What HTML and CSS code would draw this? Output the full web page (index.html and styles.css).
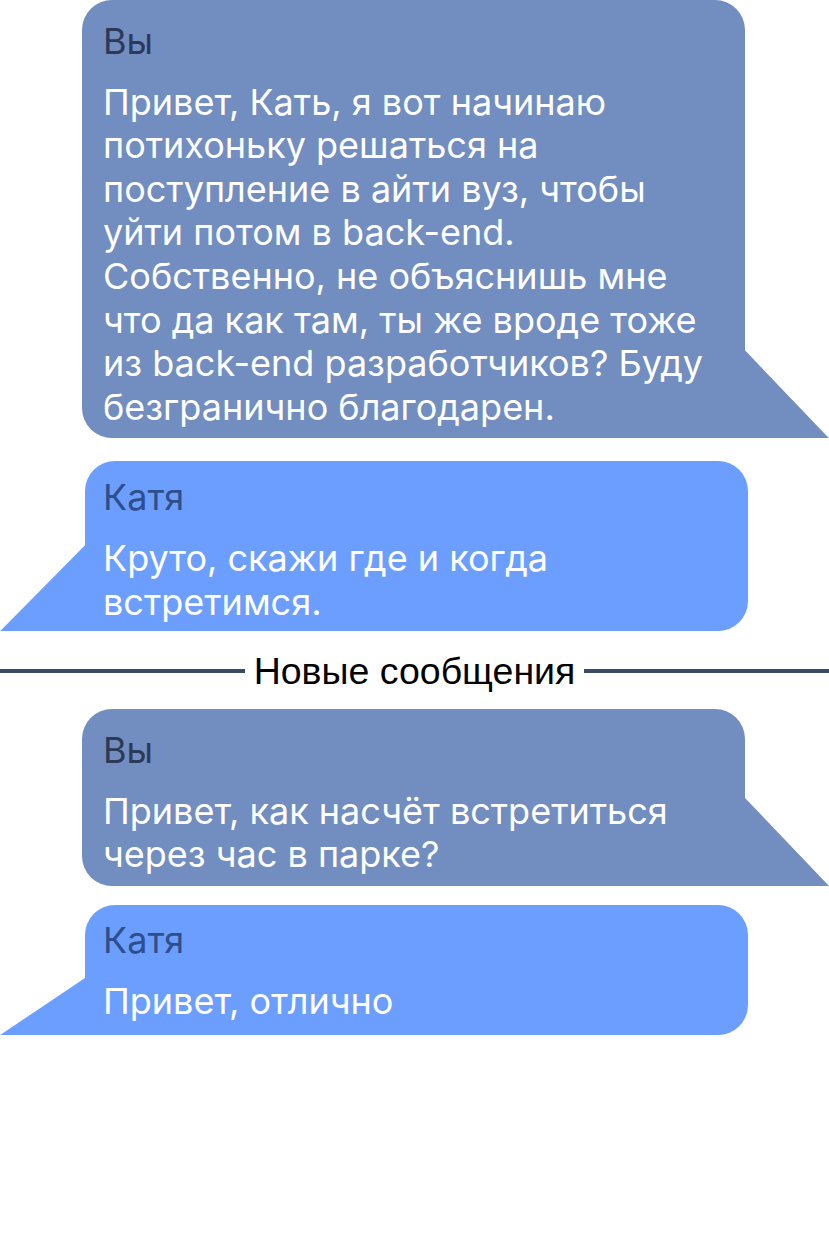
FILE: index.html
```html
<!DOCTYPE html>
<html lang="ru">
<head>
<meta charset="utf-8">
<title>Чат</title>
<link rel="stylesheet" href="styles.css">
</head>
<body>
<div class="chat">
  <div class="msg msg-out">
    <div class="name">Вы</div>
    <div class="text">Привет, Кать, я вот начинаю<br>потихоньку решаться на<br>поступление в айти вуз, чтобы<br>уйти потом в back-end.<br>Собственно, не объяснишь мне<br>что да как там, ты же вроде тоже<br>из back-end разработчиков? Буду<br>безгранично благодарен.</div>
  </div>
  <div class="msg msg-in">
    <div class="name">Катя</div>
    <div class="text">Круто, скажи где и когда<br>встретимся.</div>
  </div>
  <div class="divider">
    <span class="divider-line"></span>
    <span class="divider-text">Новые сообщения</span>
    <span class="divider-line"></span>
  </div>
  <div class="msg msg-out">
    <div class="name">Вы</div>
    <div class="text">Привет, как насчёт встретиться<br>через час в парке?</div>
  </div>
  <div class="msg msg-in msg-short-tail">
    <div class="name">Катя</div>
    <div class="text">Привет, отлично</div>
  </div>
</div>
</body>
</html>
```
FILE: styles.css
```css
html, body {
  margin: 0;
  padding: 0;
  background: #ffffff;
}

.chat {
  width: 829px;
  display: flex;
  flex-direction: column;
  font-family: "Inter", "Noto Sans", sans-serif;
}

.msg {
  position: relative;
  width: 663px;
  box-sizing: border-box;
  padding: 20px 21px 9px 21px;
  font-size: 36px;
  color: #ffffff;
}

.msg .name {
  line-height: 43.6px;
  margin-bottom: 17px;
}

.msg .text {
  line-height: 43.6px;
}

.msg-out {
  margin-left: 82px;
  background: #728dc0;
  border-radius: 30px 30px 0 30px;
}

.msg-out .name {
  color: #2c3a57;
}

.msg-out::after {
  content: "";
  position: absolute;
  left: 100%;
  bottom: 0;
  width: 84px;
  height: 88px;
  background: #728dc0;
  clip-path: polygon(0 0, 100% 100%, 0 100%);
}

.msg-in {
  margin-left: 85px;
  padding: 15px 18px 7px 18px;
  background: #6b9eff;
  border-radius: 30px 30px 30px 0;
}

.msg-in .name {
  color: #2f4f8c;
}

.msg-in::after {
  content: "";
  position: absolute;
  right: 100%;
  bottom: 0;
  width: 85px;
  height: 86px;
  background: #6b9eff;
  clip-path: polygon(100% 0, 100% 100%, 0 100%);
}

.msg-short-tail {
  padding-top: 14px;
  padding-bottom: 12px;
}

.msg-short-tail::after {
  height: 57px;
}

.msg-out + .msg-in {
  margin-top: 23px;
}

.msg-out + .msg-in.msg-short-tail {
  margin-top: 19px;
}

.divider {
  display: flex;
  align-items: center;
  gap: 9px;
  height: 44px;
  margin: 18px 0 16px 0;
}

.divider-line {
  flex: 1;
  height: 4px;
  background: #3c4a68;
}

.divider-text {
  font-family: "Liberation Sans", Arial, sans-serif;
  font-size: 37.5px;
  color: #000000;
  line-height: 44px;
}
```
